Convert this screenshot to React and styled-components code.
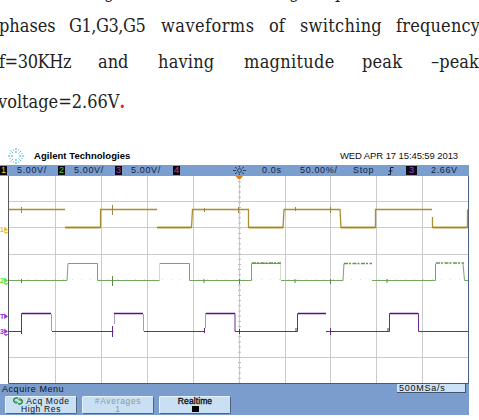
import React from 'react';
import styled, { createGlobalStyle } from 'styled-components';

const GlobalStyle = createGlobalStyle`
  * { box-sizing: border-box; }
  body {
    margin: 0;
    background: #fff;
    overflow: hidden;
  }
`;

const lines = [
  {
    columns: '70px 92px 108px 31px 96px 1fr',
    words: [
      ['phases', 0],
      ['G1,G3,G5', -0.45],
      ['waveforms', 0.45],
      ['of', 0],
      ['switching', 0.3],
      ['frequency', 0.2],
    ],
  },
  {
    columns: '99px 60px 86px 118px 69px 1fr',
    words: [
      ['f=30KHz', -0.4],
      ['and', 0],
      ['having', 0.2],
      ['magnitude', 0.3],
      ['peak', 0.2],
      ['–peak', 0.1],
    ],
  },
];

const COLS = [55.5, 101.5, 147.5, 193.5, 239.5, 285.5, 330.5, 376.5, 422.5];
const ROWS = [25.5, 51.5, 78.5, 181.5];

const yellow = [
  'M9 33.5H65', 'M65 51.5H100.5V33.5H157', 'M157 51.5H191.5L192.5 33.5H248.5V51.5H283L284 33.5H340L341 51.5H375.5V33.5H432',
  'M432.5 41V51.5H467.5V33.5',
];
const green = [
  'M9 104.5H67L68 87.5H97.5V104.5H159.5', 'M160 87.5H189.5V104.5H251.5V87.5H280', 'M281 104.5H343L344 87.5',
  'M372 104.5H435.5V87.5', 'M463 87.5L464.5 104.5H468',
];
const purple = [
  'M9 155.5H21.5V137.5H51', 'M52 155.5H113.5', 'M114 137.5H143', 'M144 155.5H205', 'M205.5 137.5H235V155.5H297.5V137.5H326',
  'M326 155.5H389.5V137.5H418.5V155.5H468',
];

const Waveforms = () => (
  <svg width="469" height="208" viewBox="0 0 469 208">
    <g stroke="#cbcbcb" fill="none">
      {COLS.map((x) => <path key={x} d={`M${x} 0V207`} />)}
      {ROWS.map((y) => <path key={y} d={`M8 ${y}H468`} />)}
      <path d="M9 103.5H468" stroke="#ddd" strokeDasharray="1 8" />
      <path d="M239.5 0V207" stroke="#bbb" strokeWidth="3" strokeDasharray="1 4.17" />
    </g>
    <path d="M8.5 0V207.5H468" fill="none" stroke="#55585e" />
    <path d="M468.5 0V208" stroke="#4a5f85" />
    <path d="M235.5 0H243L240.5 3H238Z" fill="#d98320" />
    <g fill="none">
      <g stroke="#ab8f2c" strokeWidth="1.3">
        {yellow.map((d) => <path key={d} d={d} />)}
        <path d="M65 51.5H100M157 51.5H191M249 51.5H283M341 51.5H375M433 51.5H467" stroke="#ab8416" />
      </g>
      <g stroke="#74a862">
        {green.map((d) => <path key={d} d={d} />)}
        <path d="M159.5 104V87M280.5 87V104" stroke="#cfe0c8" />
        <path d="M252 87H281M344 87.5H372M436 87H464" stroke="#5d9a48" strokeWidth="1.5" strokeDasharray="4 1 2 1.5" />
      </g>
      <g stroke="#6d2a96">
        {purple.map((d) => <path key={d} d={d} />)}
        <path d="M22 137.5H51M114 137.5H143M206 137.5H235M298 137.5H326M390 137.5H418" stroke="#590d94" strokeWidth="1.5" />
        <path d="M51.5 138V155M143.5 138V155M114.5 138V148M205.5 138V152" stroke="#b294c4" />
      </g>
      <path d="M21.5 31V37M112.5 29V39M204.5 32V36M238.5 31V37M295.5 31V35M330.5 31V37" stroke="#9a864a" />
      <path d="M21.5 103V107M112.5 100V110M204 103V107M239.5 103V108M295 103V107M330.5 103V108M387 103V107" stroke="#5a8a45" />
      <path d="M21.5 152V158M112.5 150V161M204.5 152V157M239.5 153V158M296 152V156M330.5 152V159M388 152V156" stroke="#5d2a80" />
    </g>
  </svg>
);

const AgilentSpark = () => (
  <svg width="16" height="16" viewBox="0 0 16 16" fill="none" stroke="#45a9ce">
    <path d="M8 0V2M8 3V5M8 11V13M8 14V16M0 8H2M3 8H5M11 8H13M14 8H16" />
    <path d="M2.5 2.5L5.5 5.5M10.5 10.5L13.5 13.5M2.5 13.5L5.5 10.5M10.5 5.5L13.5 2.5" strokeDasharray="1.4 .9" />
    <path d="M5 1L6 3M11 1L10 3M1 5L3 6M15 5L13 6M1 11L3 10M15 11L13 10M5 15L6 13M11 15L10 13" strokeWidth=".5" />
  </svg>
);

const Brightness = () => (
  <svg width="13" height="9" viewBox="0 0 13 9" fill="none" stroke="#20364b" strokeWidth=".9">
    <circle cx="6.5" cy="4.5" r="1.9" />
    <path d="M6.5 0V1.5M6.5 7.5V9M0 4.5H3M10 4.5H13M2 1L4 2.5M11 1L9 2.5M2 8L4 6.5M11 8L9 6.5" />
  </svg>
);

const CycleIcon = () => (
  <svg width="12" height="8" viewBox="0 0 12 9" fill="none" stroke="#1d7a1f" strokeWidth="1.5">
    <path d="M6 1.2C3 .3 .8 2.2 1.2 4.2C1.5 5.5 2.5 6.1 3.5 6.2" />
    <path d="M6 7.8C9.5 8.2 11.3 6.5 10.8 4.5C10.4 3.2 9.5 2.8 8.5 2.8" />
    <path d="M3.2 3.8L6.2 6.2L3.2 8.4Z" fill="#35b832" stroke="none" />
    <path d="M8.8 .6L5.8 2.8L8.8 5Z" fill="#35b832" stroke="none" />
  </svg>
);

const ChannelMarker = ({ top, color, label, ground }) => (
  <Marker $top={top} $color={color}>
    {label}
    <svg width="5" height="9" viewBox="0 0 5 9" stroke={color} fill={color}>
      <path d="M.5 2L3.5 4.5L.5 6.5Z" strokeWidth=".6" />
      {ground && <path d="M0 7.5H4M1 8.7H3" strokeWidth=".8" />}
    </svg>
  </Marker>
);

const App = () => (
  <>
    <GlobalStyle />
    <Page>
      <Paragraph>
        <CutLine>
          <span>g</span>
          <span>g</span>
          <span>p</span>
        </CutLine>
        {lines.map((line, i) => (
          <Line key={i} $columns={line.columns}>
            {line.words.map(([word, spacing]) => (
              <Word key={word} $spacing={spacing}>{word}</Word>
            ))}
          </Line>
        ))}
        <LastLine>
          voltage=2.66V<RedDot>.</RedDot>
        </LastLine>
      </Paragraph>
      <Scope>
        <Header>
          <AgilentSpark />
          <Brand>Agilent Technologies</Brand>
          <Stamp>WED APR 17 15:45:59 2013</Stamp>
        </Header>
        <StatusBar>
          <Badge $color="#c9dd2c">1</Badge>
          <Reading>5.00V/</Reading>
          <Badge $color="#45cf38">2</Badge>
          <Reading>5.00V/</Reading>
          <Badge $color="#a338d0">3</Badge>
          <Reading>5.00V/</Reading>
          <Badge $color="#ee2f70">4</Badge>
          <Brightness />
          <Reading>0.0s</Reading>
          <Reading>50.00%/</Reading>
          <Reading>Stop</Reading>
          <Reading>
            <svg width="6" height="8" viewBox="0 0 6 8" fill="none" stroke="#14233a">
              <path d="M0 7.5H2.5V.5H5.5M.5 4H4.5" />
            </svg>
          </Reading>
          <Badge $wide $color="#b23fe0">3</Badge>
          <Reading>2.66V</Reading>
        </StatusBar>
        <Screen>
          <Waveforms />
          <ChannelMarker top={49} color="#e8bd1c" label="1" ground />
          <ChannelMarker top={100} color="#45e52c" label="2" ground />
          <ChannelMarker top={136} color="#9331c9" label="T" />
          <ChannelMarker top={151} color="#9331d9" label="3" ground />
        </Screen>
        <Menu>
          <MenuTop>
            <MenuTitle>Acquire Menu</MenuTitle>
            <SampleRate>500MSa/s</SampleRate>
          </MenuTop>
          <Softkeys>
            <Softkey>
              <KeyRow>
                <CycleIcon />
                Acq Mode
              </KeyRow>
              <KeyRow>High Res</KeyRow>
            </Softkey>
            <Softkey $disabled>
              <KeyRow>#Averages</KeyRow>
              <KeyRow>1</KeyRow>
            </Softkey>
            <Softkey>
              <KeyRow $strong>Realtime</KeyRow>
              <Check />
            </Softkey>
          </Softkeys>
        </Menu>
      </Scope>
    </Page>
  </>
);

export default App;

const Page = styled.div`
  width: 479px;
  height: 420px;
  overflow: hidden;
  background: #fff;
`;

const Paragraph = styled.div`
  height: 146px;
  color: #222;
  font: 18px/36px 'DejaVu Serif Condensed', 'DejaVu Serif', serif;
  font-stretch: condensed;
  white-space: nowrap;
`;

const CutLine = styled.div`
  display: grid;
  grid-template-columns: 185px 46px 1fr;
  grid-template-rows: 100%;
  align-items: end;
  height: 3px;
  margin: 0 0 5px 104px;
  line-height: 22px;
`;

const Line = styled.div`
  display: grid;
  grid-template-columns: ${(p) => p.$columns};
  height: 36px;
  margin-left: -1px;
`;

const Word = styled.span`
  letter-spacing: ${(p) => p.$spacing}px;
`;

const LastLine = styled.div`
  height: 39px;
  line-height: 44px;
  margin-left: -2px;
`;

const RedDot = styled.span`
  color: #e22;
  font-weight: bold;
`;

const Scope = styled.div`
  width: 469px;
  font-family: 'Liberation Sans', Arial, sans-serif;
  font-size: 9px;
  color: #111;
`;

const Header = styled.div`
  display: flex;
  align-items: center;
  height: 19px;
  padding-left: 8px;
`;

const Brand = styled.span`
  margin-left: 10px;
  color: #000;
  font-size: 9.5px;
  font-weight: bold;
  letter-spacing: 0.05px;
`;

const Stamp = styled.span`
  margin: 0 11px 0 auto;
  font-size: 9.5px;
  letter-spacing: -0.1px;
`;

const StatusBar = styled.div`
  display: grid;
  grid-template-columns: 17px 41px 16px 41px 16px 42px 60px 29px 38px 53px 35px 18px 25px 1fr;
  align-items: center;
  height: 11px;
  background: #7b9ed0;
`;

const Badge = styled.span`
  width: ${(p) => (p.$wide ? 11 : 7)}px;
  height: 9px;
  background: #0c0811;
  color: ${(p) => p.$color};
  font-size: 9px;
  line-height: 9px;
  text-align: center;
`;

const Reading = styled.span`
  color: #14233a;
  font-size: 9px;
  letter-spacing: 0.65px;
  line-height: 11px;
  white-space: nowrap;

  svg {
    display: block;
  }
`;

const Screen = styled.div`
  position: relative;
  height: 208px;

  svg {
    display: block;
  }
`;

const Marker = styled.span`
  position: absolute;
  left: 0;
  top: ${(p) => p.$top}px;
  display: flex;
  align-items: center;
  color: ${(p) => p.$color};
  font-size: 7px;
  font-weight: bold;
  line-height: 9px;
`;

const Menu = styled.div`
  height: 31px;
  background: #7b9dcd;
`;

const MenuTop = styled.div`
  display: flex;
  justify-content: space-between;
  height: 11px;
  padding: 0 3px 0 2px;
  line-height: 10px;
`;

const MenuTitle = styled.span`
  font-size: 9px;
  letter-spacing: 0.55px;
`;

const SampleRate = styled.span`
  width: 69px;
  height: 9px;
  padding-left: 2px;
  background: #cee2f5;
  border-right: 1px solid #3f5671;
  border-bottom: 1px solid #3f5671;
  letter-spacing: 0.75px;
  line-height: 9px;
`;

const Softkeys = styled.div`
  display: flex;
  gap: 5px;
  padding: 1px 0 0 5px;
`;

const Softkey = styled.div`
  display: flex;
  flex-direction: column;
  align-items: center;
  width: 72px;
  height: 18px;
  border: 1px solid;
  border-color: #e7f4ff #50647c #50647c #e7f4ff;
  border-radius: 2px;
  background: #c9dff4;
  color: ${(p) => (p.$disabled ? '#8d99a4' : '#111')};
`;

const KeyRow = styled.span`
  display: flex;
  align-items: center;
  gap: 2px;
  height: 8px;
  font-size: 8.5px;
  letter-spacing: ${(p) => (p.$strong ? 0.1 : 0.65)}px;
  line-height: 8px;
  -webkit-text-stroke: ${(p) => (p.$strong ? '0.35px' : '0')};
  white-space: nowrap;
`;

const Check = styled.i`
  width: 7px;
  height: 6px;
  margin-top: 1px;
  background: #000;
`;
